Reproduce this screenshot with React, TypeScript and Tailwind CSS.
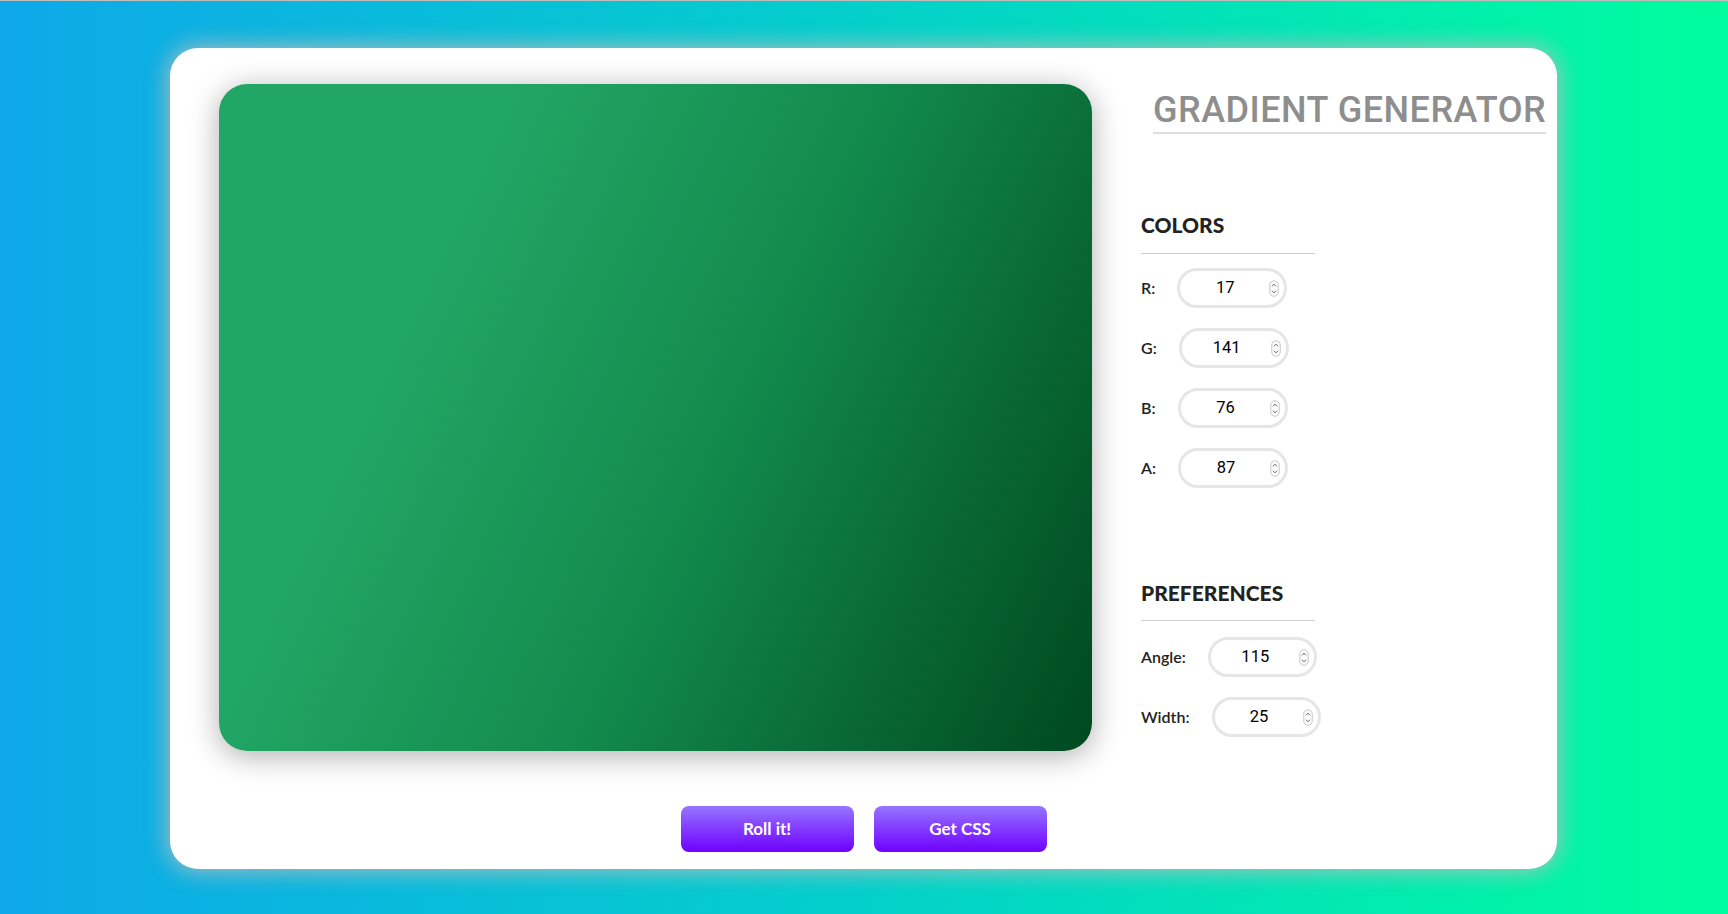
import React from "react";

function Spinner() {
  return (
    <svg width="10" height="17" viewBox="0 0 10 17" className="shrink-0">
      <rect x="0.75" y="0.75" width="8.5" height="15.5" rx="4.25" fill="#fafafa" stroke="#c9c9c9" strokeWidth="1" />
      <path d="M3.2 6 L5 4.2 L6.8 6" fill="none" stroke="#555" strokeWidth="0.9" strokeLinecap="round" strokeLinejoin="round" />
      <path d="M3.2 11 L5 12.8 L6.8 11" fill="none" stroke="#555" strokeWidth="0.9" strokeLinecap="round" strokeLinejoin="round" />
    </svg>
  );
}

function NumField({ label, value, w }: { label: string; value: string; w: string }) {
  return (
    <div className="flex items-center">
      <span className="text-[16px] font-semibold text-[#222] leading-none">{label}</span>
      <div className={`ml-[22px] flex h-[40px] ${w} items-center rounded-full border-[3px] border-[#e6e6e6] bg-white pl-[1px] pr-[5px]`}>
        <span className="flex-1 text-center text-[16.5px] text-black leading-none font-['Roboto',sans-serif]">{value}</span>
        <Spinner />
      </div>
    </div>
  );
}

export default function App() {
  return (
    <div className="min-h-[914px] w-full border-t border-[#bdbdbd] bg-[linear-gradient(90deg,#0ea8e9_0%,#04d0cb_50%,#00fd9e_100%)] font-['Lato',sans-serif] pt-[47px]">
      <div className="ml-[170px] flex h-[821px] w-[1387px] flex-col rounded-[28px] bg-white pl-[49px] pt-[36px] shadow-[0_0_22px_3px_rgba(185,190,192,0.85)]">
        <div className="flex">
          <div className="h-[667px] w-[873px] rounded-[28px] bg-[linear-gradient(115deg,#22a665_25%,#138c4e_55%,#004820_100%)] shadow-[0_5px_30px_rgba(0,0,0,0.32)]" />
          <div className="ml-[49px] flex w-[405px] flex-col">
            <div className="ml-[12px] mt-[8px] border-b-2 border-[#dedede] pb-[4px] font-['Roboto',sans-serif] text-[36px] font-medium leading-none tracking-[0.5px] text-[#8e8e8e] whitespace-nowrap">
              GRADIENT GENERATOR
            </div>
            <div className="mt-[80px] w-[174px] border-b border-[#cfcfcf] pb-[18px] text-[21px] font-black leading-none text-[#222]">
              COLORS
            </div>
            <div className="mt-[14px] flex flex-col gap-[20px]">
              <NumField label="R:" value="17" w="w-[110px]" />
              <NumField label="G:" value="141" w="w-[110px]" />
              <NumField label="B:" value="76" w="w-[110px]" />
              <NumField label="A:" value="87" w="w-[110px]" />
            </div>
            <div className="mt-[94px] w-[174px] border-b border-[#cfcfcf] pb-[17px] text-[21px] font-black leading-none text-[#222]">
              PREFERENCES
            </div>
            <div className="mt-[16px] flex flex-col gap-[20px]">
              <NumField label="Angle:" value="115" w="w-[109px]" />
              <NumField label="Width:" value="25" w="w-[109px]" />
            </div>
          </div>
        </div>
        <div className="mt-[55px] flex justify-center gap-[20px] pr-[49px]">
          <button className="h-[46px] w-[173px] rounded-[8px] bg-[linear-gradient(180deg,#9675ff_0%,#6f00ff_100%)] text-[17px] font-bold text-white">
            Roll it!
          </button>
          <button className="h-[46px] w-[173px] rounded-[8px] bg-[linear-gradient(180deg,#9675ff_0%,#6f00ff_100%)] text-[17px] font-bold text-white">
            Get CSS
          </button>
        </div>
      </div>
    </div>
  );
}
